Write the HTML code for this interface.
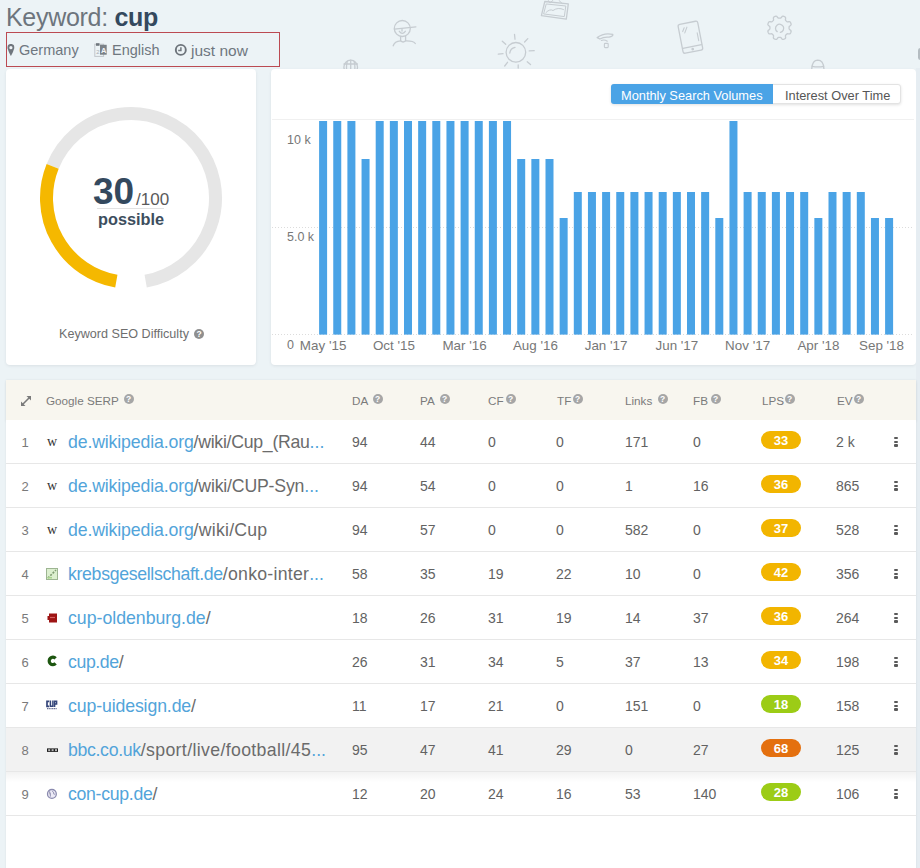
<!DOCTYPE html>
<html><head><meta charset="utf-8"><style>
*{box-sizing:border-box;margin:0;padding:0}
html,body{width:920px;height:868px;overflow:hidden}
body{position:relative;background:#ecf3f6;font-family:"Liberation Sans",sans-serif;color:#555}
.a{position:absolute;white-space:nowrap}
.card{position:absolute;background:#fff;border-radius:4px;box-shadow:0 1px 3px rgba(60,70,80,.10)}
.q{position:absolute;width:10px;height:10px;border-radius:50%;background:#a6a6a6}
.q:after{content:"?";position:absolute;left:0;top:0;width:10px;height:10px;color:#fff;font-size:8.5px;line-height:10px;text-align:center;font-weight:bold}
.th{font-size:11.7px;line-height:12px;color:#7b7b7b}
.td{font-size:14px;line-height:14px;color:#626262}
.url{font-size:17.7px;line-height:18px;color:#52a4da}
.url i{font-style:normal}.url span{color:#6b6b6b}.url b{font-weight:normal;color:#52a4da}
.badge{position:absolute;left:761px;width:40px;height:18px;border-radius:9px;color:#fff;font-weight:bold;font-size:13px;line-height:20.5px;text-align:center}
.dot{position:absolute;left:894.2px;width:3.4px;height:2.6px;background:#5a5a5a;border-radius:1px}
.rn{font-size:13px;line-height:13px;color:#7a7a7a}
</style></head><body>
<svg class="a" style="left:0;top:0" width="920" height="70" fill="none" stroke="#c6ccd1" stroke-width="1.3" stroke-linecap="round" stroke-linejoin="round">
<!-- person -->
<circle cx="402.3" cy="28.5" r="8"/>
<path d="M394.4 29.2 L415.9 26.8"/>
<path d="M402 29 V31"/>
<path d="M399.3 31.3 Q402.3 35.5 405.3 31.3"/>
<path d="M400.6 36.3 V40.8 Q403 43.2 405.6 40.8 V36.3"/>
<path d="M393.2 45.8 Q394.5 41.2 400.6 40.8"/>
<path d="M405.6 40.8 Q413.5 40.6 415.3 43.5"/>
<!-- globe partial -->
<circle cx="350.7" cy="67" r="6.8"/>
<path d="M344 64 H357.4 M350.7 60.2 V74 M347.2 61.5 Q345.8 67 347.2 74 M354.2 61.5 Q355.6 67 354.2 74"/>
<!-- sun -->
<circle cx="515.9" cy="52.3" r="9.8"/>
<path d="M509.8 53 Q510.3 48.3 515 47.3"/>
<path d="M514.5 34.3 L515 39.2 M502.3 41.2 L505.7 44.3 M498.3 54.2 L503 53.6 M504.7 66 L507.5 62.3 M518.2 68 L518.2 64.8 M527.2 61.8 L530.5 64.5 M529.2 50.9 L534.2 50.6 M524.6 42 L527.8 38.6"/>
<!-- frame -->
<path d="M544.8 1.5 L568.3 3.9 L566.3 19.1 L541.4 15.7 Z"/>
<path d="M546.6 4 L565.8 6 L564.3 16.6 L544 14 Z" stroke-width="1"/>
<path d="M546 12.5 Q550 8.5 553 10.5 Q558 7 563.5 9.5" stroke-width="1"/>
<path d="M548.3 0.5 L550 3 L553 0.3 M559 0.5 L562 3.3" stroke-width="1"/>
<!-- wifi -->
<path d="M597.2 37.6 Q604 32.3 612.8 34.4 Q613.4 36.2 609 37.2 Q604 36.6 599.8 39 Q599 38.6 597.2 37.6Z"/>
<path d="M601.3 40.4 Q604.5 39.2 607.3 41.2" stroke-width="1.1"/>
<rect x="604.4" y="43.4" width="3.8" height="4.2" rx="0.8" stroke-width="1.1"/>
<!-- tablet -->
<g transform="translate(690.4 37.2) rotate(-11)">
<rect x="-10" y="-14.7" width="20" height="29.4" rx="2"/>
<path d="M-9.5 9.5 H9.5"/>
<circle cx="0" cy="12.2" r="0.7" fill="#c6ccd1"/>
<path d="M7.5 -3 V5" stroke-width="1.1"/>
<path d="M-6.5 -7 L-4.3 -10.5 M-4.7 -5.3 L-1.5 -10.5" stroke-width="1.1"/>
</g>
<!-- gear -->
<path d="M789.08 27.80 L789.08 27.99 L789.08 28.18 L789.09 28.37 L789.10 28.56 L789.12 28.75 L789.17 28.94 L789.28 29.15 L789.48 29.38 L789.79 29.64 L790.19 29.93 L790.58 30.23 L790.88 30.53 L791.04 30.81 L791.11 31.07 L791.11 31.32 L791.08 31.56 L791.02 31.80 L790.95 32.03 L790.88 32.25 L790.79 32.48 L790.69 32.70 L790.59 32.91 L790.47 33.12 L790.35 33.33 L790.20 33.52 L790.02 33.69 L789.79 33.83 L789.47 33.91 L789.06 33.92 L788.56 33.86 L788.08 33.78 L787.67 33.74 L787.37 33.76 L787.15 33.83 L786.97 33.93 L786.82 34.05 L786.68 34.18 L786.54 34.31 L786.41 34.44 L786.28 34.58 L786.14 34.71 L786.01 34.84 L785.88 34.98 L785.75 35.12 L785.63 35.27 L785.53 35.45 L785.46 35.67 L785.44 35.97 L785.48 36.38 L785.56 36.86 L785.62 37.36 L785.61 37.77 L785.53 38.09 L785.39 38.32 L785.22 38.50 L785.03 38.65 L784.82 38.77 L784.61 38.89 L784.40 38.99 L784.18 39.09 L783.95 39.18 L783.73 39.25 L783.50 39.32 L783.26 39.38 L783.02 39.41 L782.77 39.41 L782.51 39.34 L782.23 39.18 L781.93 38.88 L781.63 38.49 L781.34 38.09 L781.08 37.78 L780.85 37.58 L780.64 37.47 L780.45 37.42 L780.26 37.40 L780.07 37.39 L779.88 37.38 L779.69 37.38 L779.50 37.38 L779.31 37.38 L779.12 37.38 L778.93 37.39 L778.74 37.40 L778.55 37.42 L778.36 37.47 L778.15 37.58 L777.92 37.78 L777.66 38.09 L777.37 38.49 L777.07 38.88 L776.77 39.18 L776.49 39.34 L776.23 39.41 L775.98 39.41 L775.74 39.38 L775.50 39.32 L775.27 39.25 L775.05 39.18 L774.82 39.09 L774.60 38.99 L774.39 38.89 L774.18 38.77 L773.97 38.65 L773.78 38.50 L773.61 38.32 L773.47 38.09 L773.39 37.77 L773.38 37.36 L773.44 36.86 L773.52 36.38 L773.56 35.97 L773.54 35.67 L773.47 35.45 L773.37 35.27 L773.25 35.12 L773.12 34.98 L772.99 34.84 L772.86 34.71 L772.72 34.58 L772.59 34.44 L772.46 34.31 L772.32 34.18 L772.18 34.05 L772.03 33.93 L771.85 33.83 L771.63 33.76 L771.33 33.74 L770.92 33.78 L770.44 33.86 L769.94 33.92 L769.53 33.91 L769.21 33.83 L768.98 33.69 L768.80 33.52 L768.65 33.33 L768.53 33.12 L768.41 32.91 L768.31 32.70 L768.21 32.48 L768.12 32.25 L768.05 32.03 L767.98 31.80 L767.92 31.56 L767.89 31.32 L767.89 31.07 L767.96 30.81 L768.12 30.53 L768.42 30.23 L768.81 29.93 L769.21 29.64 L769.52 29.38 L769.72 29.15 L769.83 28.94 L769.88 28.75 L769.90 28.56 L769.91 28.37 L769.92 28.18 L769.92 27.99 L769.92 27.80 L769.92 27.61 L769.92 27.42 L769.91 27.23 L769.90 27.04 L769.88 26.85 L769.83 26.66 L769.72 26.45 L769.52 26.22 L769.21 25.96 L768.81 25.67 L768.42 25.37 L768.12 25.07 L767.96 24.79 L767.89 24.53 L767.89 24.28 L767.92 24.04 L767.98 23.80 L768.05 23.57 L768.12 23.35 L768.21 23.12 L768.31 22.90 L768.41 22.69 L768.53 22.48 L768.65 22.27 L768.80 22.08 L768.98 21.91 L769.21 21.77 L769.53 21.69 L769.94 21.68 L770.44 21.74 L770.92 21.82 L771.33 21.86 L771.63 21.84 L771.85 21.77 L772.03 21.67 L772.18 21.55 L772.32 21.42 L772.46 21.29 L772.59 21.16 L772.72 21.02 L772.86 20.89 L772.99 20.76 L773.12 20.62 L773.25 20.48 L773.37 20.33 L773.47 20.15 L773.54 19.93 L773.56 19.63 L773.52 19.22 L773.44 18.74 L773.38 18.24 L773.39 17.83 L773.47 17.51 L773.61 17.28 L773.78 17.10 L773.97 16.95 L774.18 16.83 L774.39 16.71 L774.60 16.61 L774.82 16.51 L775.05 16.42 L775.27 16.35 L775.50 16.28 L775.74 16.22 L775.98 16.19 L776.23 16.19 L776.49 16.26 L776.77 16.42 L777.07 16.72 L777.37 17.11 L777.66 17.51 L777.92 17.82 L778.15 18.02 L778.36 18.13 L778.55 18.18 L778.74 18.20 L778.93 18.21 L779.12 18.22 L779.31 18.22 L779.50 18.22 L779.69 18.22 L779.88 18.22 L780.07 18.21 L780.26 18.20 L780.45 18.18 L780.64 18.13 L780.85 18.02 L781.08 17.82 L781.34 17.51 L781.63 17.11 L781.93 16.72 L782.23 16.42 L782.51 16.26 L782.77 16.19 L783.02 16.19 L783.26 16.22 L783.50 16.28 L783.73 16.35 L783.95 16.42 L784.18 16.51 L784.40 16.61 L784.61 16.71 L784.82 16.83 L785.03 16.95 L785.22 17.10 L785.39 17.28 L785.53 17.51 L785.61 17.83 L785.62 18.24 L785.56 18.74 L785.48 19.22 L785.44 19.63 L785.46 19.93 L785.53 20.15 L785.63 20.33 L785.75 20.48 L785.88 20.62 L786.01 20.76 L786.14 20.89 L786.28 21.02 L786.41 21.16 L786.54 21.29 L786.68 21.42 L786.82 21.55 L786.97 21.67 L787.15 21.77 L787.37 21.84 L787.67 21.86 L788.08 21.82 L788.56 21.74 L789.06 21.68 L789.47 21.69 L789.79 21.77 L790.02 21.91 L790.20 22.08 L790.35 22.27 L790.47 22.48 L790.59 22.69 L790.69 22.90 L790.79 23.12 L790.88 23.35 L790.95 23.57 L791.02 23.80 L791.08 24.04 L791.11 24.28 L791.11 24.53 L791.04 24.79 L790.88 25.07 L790.58 25.37 L790.19 25.67 L789.79 25.96 L789.48 26.22 L789.28 26.45 L789.17 26.66 L789.12 26.85 L789.10 27.04 L789.09 27.23 L789.08 27.42 L789.08 27.61 L789.08 27.80Z"/>
<path d="M777.2 31.6 A4.1 4.1 0 1 1 780.4 32.3"/>
<!-- partial person -->
<path d="M811.8 68.5 Q812.3 60.2 817.8 60.1 Q823.4 60.2 823.9 68.5"/>
<path d="M812.2 66.3 Q818 67.6 823.6 66.3"/>
</svg>
<div class="a" style="left:918px;top:48px;width:5px;height:12px;border-radius:3px;background:#b4bcc1"></div>
<div class="a" style="left:6px;top:5px;font-size:25px;line-height:25px;letter-spacing:-0.3px;color:#6d757d">Keyword: <b style="color:#34495e">cup</b></div>
<div class="a" style="left:6px;top:32px;width:274px;height:35px;border:1px solid #bb4a52"></div>
<div class="a" style="font-size:14.5px;line-height:15px;color:#6f777f;top:43px;left:19px">Germany</div>
<div class="a" style="font-size:14.5px;line-height:15px;color:#6f777f;top:43px;left:112px">English</div>
<div class="a" style="font-size:14.5px;line-height:15px;color:#6f777f;top:43px;left:191px;font-size:15.5px">just now</div>
<svg class="a" style="left:0;top:36px" width="200" height="26">
<path d="M10.9 7.9 C7.9 7.9 7.3 10.1 7.6 12.2 C8.1 14.9 10.9 20 10.9 20 C10.9 20 13.7 14.9 14.2 12.2 C14.5 10.1 13.9 7.9 10.9 7.9Z" fill="#6f767d"/>
<circle cx="10.9" cy="11.7" r="1.6" fill="#eef3f7"/>
<rect x="94.8" y="8.2" width="8.8" height="12.2" fill="none" stroke="#c1c6cb" stroke-width="1"/>
<path d="M96 7.2 H99.5 V9.8 H96Z" fill="#6f767d"/>
<text x="96.2" y="17.5" font-size="6" fill="#a9aeb3" font-family="Liberation Sans">2</text>
<rect x="100" y="8.8" width="6.7" height="9.9" fill="#7a8187"/>
<text x="101" y="16.6" font-size="7.5" font-weight="bold" fill="#f2f5f8" font-family="Liberation Sans">A</text>
<circle cx="180.8" cy="13.9" r="5" fill="none" stroke="#6c737a" stroke-width="1.9"/>
<path d="M180.9 11.2 V14.5 H178.2" fill="none" stroke="#70777e" stroke-width="1.5"/>
</svg>
<div class="card" style="left:6px;top:69px;width:250px;height:296px"></div>
<div class="card" style="left:271px;top:69px;width:645px;height:296px"></div>
<svg class="a" style="left:0;top:0" width="260" height="370">
<path d="M52.65 166.35 A84.5 84.5 0 1 1 145.67 281.22" stroke="#e6e6e6" stroke-width="13" fill="none"/>
<path d="M116.33 281.22 A84.5 84.5 0 0 1 52.65 166.35" stroke="#f5b800" stroke-width="13" fill="none"/>
</svg>
<div class="a" style="left:93px;top:173px;font-size:37px;line-height:37px;font-weight:bold;color:#34495e">30</div>
<div class="a" style="left:136px;top:191px;font-size:17px;line-height:17px;color:#5a5a5a">/100</div>
<div class="a" style="left:97px;top:208px;width:67px;height:1px;background:#e2e2e2"></div>
<div class="a" style="left:98px;top:211px;font-size:16.3px;line-height:16px;font-weight:bold;color:#3d4e5e">possible</div>
<div class="a" style="left:59px;top:328px;font-size:12.6px;line-height:13px;color:#6e6e6e">Keyword SEO Difficulty</div>
<div class="q" style="left:194px;top:329px;background:#8f8f8f"></div>
<div class="a" style="left:611px;top:84px;width:290px;height:20px;border-radius:3px;background:#fff;border:1px solid #e3e3e3;box-shadow:0 1px 3px rgba(0,0,0,.12)"></div>
<div class="a" style="left:611px;top:84px;width:162px;height:20px;border-radius:3px 0 0 3px;background:#4aa3e6"></div>
<div class="a" style="left:621px;top:89px;font-size:12.8px;line-height:13px;color:#fff">Monthly Search Volumes</div>
<div class="a" style="left:785px;top:89px;font-size:12.8px;line-height:13px;color:#555">Interest Over Time</div>
<svg class="a" style="left:0;top:0" width="920" height="370"><line x1="272" y1="119.5" x2="914" y2="119.5" stroke="#f0f0f0" stroke-width="1"/><line x1="272" y1="227.5" x2="914" y2="227.5" stroke="#dcdcdc" stroke-width="1" stroke-dasharray="1 2"/><line x1="272" y1="334.5" x2="914" y2="334.5" stroke="#dcdcdc" stroke-width="1" stroke-dasharray="1 2"/><rect x="319.10" y="121" width="8" height="213.6" fill="#4aa3e6"/><rect x="333.25" y="121" width="8" height="213.6" fill="#4aa3e6"/><rect x="347.40" y="121" width="8" height="213.6" fill="#4aa3e6"/><rect x="361.55" y="159" width="8" height="175.6" fill="#4aa3e6"/><rect x="375.70" y="121" width="8" height="213.6" fill="#4aa3e6"/><rect x="389.85" y="121" width="8" height="213.6" fill="#4aa3e6"/><rect x="404.00" y="121" width="8" height="213.6" fill="#4aa3e6"/><rect x="418.15" y="121" width="8" height="213.6" fill="#4aa3e6"/><rect x="432.30" y="121" width="8" height="213.6" fill="#4aa3e6"/><rect x="446.45" y="121" width="8" height="213.6" fill="#4aa3e6"/><rect x="460.60" y="121" width="8" height="213.6" fill="#4aa3e6"/><rect x="474.75" y="121" width="8" height="213.6" fill="#4aa3e6"/><rect x="488.90" y="121" width="8" height="213.6" fill="#4aa3e6"/><rect x="503.05" y="121" width="8" height="213.6" fill="#4aa3e6"/><rect x="517.20" y="159" width="8" height="175.6" fill="#4aa3e6"/><rect x="531.35" y="159" width="8" height="175.6" fill="#4aa3e6"/><rect x="545.50" y="159" width="8" height="175.6" fill="#4aa3e6"/><rect x="559.65" y="218" width="8" height="116.6" fill="#4aa3e6"/><rect x="573.80" y="192" width="8" height="142.6" fill="#4aa3e6"/><rect x="587.95" y="192" width="8" height="142.6" fill="#4aa3e6"/><rect x="602.10" y="192" width="8" height="142.6" fill="#4aa3e6"/><rect x="616.25" y="192" width="8" height="142.6" fill="#4aa3e6"/><rect x="630.40" y="192" width="8" height="142.6" fill="#4aa3e6"/><rect x="644.55" y="192" width="8" height="142.6" fill="#4aa3e6"/><rect x="658.70" y="192" width="8" height="142.6" fill="#4aa3e6"/><rect x="672.85" y="192" width="8" height="142.6" fill="#4aa3e6"/><rect x="687.00" y="192" width="8" height="142.6" fill="#4aa3e6"/><rect x="701.15" y="192" width="8" height="142.6" fill="#4aa3e6"/><rect x="715.30" y="218" width="8" height="116.6" fill="#4aa3e6"/><rect x="729.45" y="121" width="8" height="213.6" fill="#4aa3e6"/><rect x="743.60" y="192" width="8" height="142.6" fill="#4aa3e6"/><rect x="757.75" y="192" width="8" height="142.6" fill="#4aa3e6"/><rect x="771.90" y="192" width="8" height="142.6" fill="#4aa3e6"/><rect x="786.05" y="192" width="8" height="142.6" fill="#4aa3e6"/><rect x="800.20" y="192" width="8" height="142.6" fill="#4aa3e6"/><rect x="814.35" y="218" width="8" height="116.6" fill="#4aa3e6"/><rect x="828.50" y="192" width="8" height="142.6" fill="#4aa3e6"/><rect x="842.65" y="192" width="8" height="142.6" fill="#4aa3e6"/><rect x="856.80" y="192" width="8" height="142.6" fill="#4aa3e6"/><rect x="870.95" y="218" width="8" height="116.6" fill="#4aa3e6"/><rect x="885.10" y="218" width="8" height="116.6" fill="#4aa3e6"/></svg>
<div class="a" style="font-size:12.5px;line-height:13px;color:#777;left:287px;top:134px">10 k</div>
<div class="a" style="font-size:12.5px;line-height:13px;color:#777;left:287px;top:231px">5.0 k</div>
<div class="a" style="font-size:12.5px;line-height:13px;color:#777;left:287px;top:339px">0</div>
<div class="a" style="font-size:12.5px;line-height:13px;color:#777;left:263.1px;width:120px;text-align:center;top:339px;font-size:13.4px">May '15</div>
<div class="a" style="font-size:12.5px;line-height:13px;color:#777;left:333.9px;width:120px;text-align:center;top:339px;font-size:13.4px">Oct '15</div>
<div class="a" style="font-size:12.5px;line-height:13px;color:#777;left:404.6px;width:120px;text-align:center;top:339px;font-size:13.4px">Mar '16</div>
<div class="a" style="font-size:12.5px;line-height:13px;color:#777;left:475.4px;width:120px;text-align:center;top:339px;font-size:13.4px">Aug '16</div>
<div class="a" style="font-size:12.5px;line-height:13px;color:#777;left:546.1px;width:120px;text-align:center;top:339px;font-size:13.4px">Jan '17</div>
<div class="a" style="font-size:12.5px;line-height:13px;color:#777;left:616.9px;width:120px;text-align:center;top:339px;font-size:13.4px">Jun '17</div>
<div class="a" style="font-size:12.5px;line-height:13px;color:#777;left:687.6px;width:120px;text-align:center;top:339px;font-size:13.4px">Nov '17</div>
<div class="a" style="font-size:12.5px;line-height:13px;color:#777;left:758.4px;width:120px;text-align:center;top:339px;font-size:13.4px">Apr '18</div>
<div class="a" style="font-size:12.5px;line-height:13px;color:#777;left:821.5px;width:120px;text-align:center;top:339px;font-size:13.4px">Sep '18</div>
<div class="a" style="left:916px;top:68px;width:4px;height:800px;background:#e6edf2"></div>
<div class="a" style="left:6px;top:380px;width:910px;height:500px;background:#fff;box-shadow:0 0 2px rgba(0,0,0,.08)"></div>
<div class="a" style="left:6px;top:380px;width:910px;height:40px;background:#f8f6ef;box-shadow:0 2px 3px rgba(0,0,0,.06)"></div>
<svg class="a" style="left:19px;top:394px" width="14" height="14" fill="#7a7a7a" stroke="#7a7a7a">
<path d="M3 11 L11 3" stroke-width="1.6"/><path d="M7.5 2 H12 V6.5Z" stroke="none"/><path d="M2 7.5 V12 H6.5Z" stroke="none"/></svg>
<div class="a th" style="left:46px;top:394.5px">Google SERP</div>
<div class="q" style="left:123.5px;top:394px"></div>
<div class="a th" style="left:352px;top:394.5px">DA</div>
<div class="q" style="left:372.5px;top:394px"></div>
<div class="a th" style="left:420px;top:394.5px">PA</div>
<div class="q" style="left:439.5px;top:394px"></div>
<div class="a th" style="left:488px;top:394.5px">CF</div>
<div class="q" style="left:505.5px;top:394px"></div>
<div class="a th" style="left:557px;top:394.5px">TF</div>
<div class="q" style="left:572.5px;top:394px"></div>
<div class="a th" style="left:625px;top:394.5px">Links</div>
<div class="q" style="left:657.5px;top:394px"></div>
<div class="a th" style="left:693px;top:394.5px">FB</div>
<div class="q" style="left:710.5px;top:394px"></div>
<div class="a th" style="left:762px;top:394.5px">LPS</div>
<div class="q" style="left:784.5px;top:394px"></div>
<div class="a th" style="left:837px;top:394.5px">EV</div>
<div class="q" style="left:853.5px;top:394px"></div>
<div class="a" style="left:6px;top:420px;width:910px;height:44px;background:#fff;border-bottom:1px solid #e7e7e7"></div>
<div class="a rn" style="left:21.5px;top:435.5px">1</div>
<div class="a url" style="left:68px;top:432.5px"><i style="letter-spacing:-0.14px">de.wikipedia.org</i><span style="letter-spacing:-0.28px">/wiki/Cup_(Rau</span><b>...</b></div>
<div class="a td" style="left:352px;top:434.5px">94</div>
<div class="a td" style="left:420px;top:434.5px">44</div>
<div class="a td" style="left:488px;top:434.5px">0</div>
<div class="a td" style="left:556px;top:434.5px">0</div>
<div class="a td" style="left:625px;top:434.5px">171</div>
<div class="a td" style="left:693px;top:434.5px">0</div>
<div class="badge" style="top:430.5px;background:#f2b500">33</div>
<div class="a td" style="left:836px;top:434.5px">2 k</div>
<div class="dot" style="top:436.6px"></div>
<div class="dot" style="top:440.6px"></div>
<div class="dot" style="top:444.2px"></div>
<div class="a" style="left:47px;top:420px;margin-top:15px;font-family:'Liberation Serif',serif;font-size:14px;line-height:14px;color:#333">w</div>
<div class="a" style="left:6px;top:464px;width:910px;height:44px;background:#fff;border-bottom:1px solid #e7e7e7"></div>
<div class="a rn" style="left:21.5px;top:479.5px">2</div>
<div class="a url" style="left:68px;top:476.5px"><i style="letter-spacing:-0.14px">de.wikipedia.org</i><span style="letter-spacing:-0.18px">/wiki/CUP-Syn</span><b>...</b></div>
<div class="a td" style="left:352px;top:478.5px">94</div>
<div class="a td" style="left:420px;top:478.5px">54</div>
<div class="a td" style="left:488px;top:478.5px">0</div>
<div class="a td" style="left:556px;top:478.5px">0</div>
<div class="a td" style="left:625px;top:478.5px">1</div>
<div class="a td" style="left:693px;top:478.5px">16</div>
<div class="badge" style="top:474.5px;background:#f2b500">36</div>
<div class="a td" style="left:836px;top:478.5px">865</div>
<div class="dot" style="top:480.6px"></div>
<div class="dot" style="top:484.6px"></div>
<div class="dot" style="top:488.2px"></div>
<div class="a" style="left:47px;top:464px;margin-top:15px;font-family:'Liberation Serif',serif;font-size:14px;line-height:14px;color:#333">w</div>
<div class="a" style="left:6px;top:508px;width:910px;height:44px;background:#fff;border-bottom:1px solid #e7e7e7"></div>
<div class="a rn" style="left:21.5px;top:523.5px">3</div>
<div class="a url" style="left:68px;top:520.5px"><i style="letter-spacing:-0.14px">de.wikipedia.org</i><span style="letter-spacing:0.23px">/wiki/Cup</span></div>
<div class="a td" style="left:352px;top:522.5px">94</div>
<div class="a td" style="left:420px;top:522.5px">57</div>
<div class="a td" style="left:488px;top:522.5px">0</div>
<div class="a td" style="left:556px;top:522.5px">0</div>
<div class="a td" style="left:625px;top:522.5px">582</div>
<div class="a td" style="left:693px;top:522.5px">0</div>
<div class="badge" style="top:518.5px;background:#f2b500">37</div>
<div class="a td" style="left:836px;top:522.5px">528</div>
<div class="dot" style="top:524.6px"></div>
<div class="dot" style="top:528.6px"></div>
<div class="dot" style="top:532.2px"></div>
<div class="a" style="left:47px;top:508px;margin-top:15px;font-family:'Liberation Serif',serif;font-size:14px;line-height:14px;color:#333">w</div>
<div class="a" style="left:6px;top:552px;width:910px;height:44px;background:#fff;border-bottom:1px solid #e7e7e7"></div>
<div class="a rn" style="left:21.5px;top:567.5px">4</div>
<div class="a url" style="left:68px;top:564.5px"><i style="letter-spacing:-0.32px">krebsgesellschaft.de</i><span style="letter-spacing:0.25px">/onko-inter</span><b>...</b></div>
<div class="a td" style="left:352px;top:566.5px">58</div>
<div class="a td" style="left:420px;top:566.5px">35</div>
<div class="a td" style="left:488px;top:566.5px">19</div>
<div class="a td" style="left:556px;top:566.5px">22</div>
<div class="a td" style="left:625px;top:566.5px">10</div>
<div class="a td" style="left:693px;top:566.5px">0</div>
<div class="badge" style="top:562.5px;background:#f2b500">42</div>
<div class="a td" style="left:836px;top:566.5px">356</div>
<div class="dot" style="top:568.6px"></div>
<div class="dot" style="top:572.6px"></div>
<div class="dot" style="top:576.2px"></div>
<svg class="a" style="left:46px;top:552px;margin-top:16px" width="12" height="12"><rect x="0.5" y="0.5" width="11" height="11" fill="#dcefcf" stroke="#9db592"/><path d="M2 10 L10 2" stroke="#7f9b72" stroke-width="1.6" stroke-dasharray="2 1.3"/><path d="M1.5 9 H6 V10.5 H1.5Z" fill="#a8d48c"/></svg>
<div class="a" style="left:6px;top:596px;width:910px;height:44px;background:#fff;border-bottom:1px solid #e7e7e7"></div>
<div class="a rn" style="left:21.5px;top:611.5px">5</div>
<div class="a url" style="left:68px;top:608.5px"><i style="letter-spacing:0px">cup-oldenburg.de</i><span style="letter-spacing:0px">/</span></div>
<div class="a td" style="left:352px;top:610.5px">18</div>
<div class="a td" style="left:420px;top:610.5px">26</div>
<div class="a td" style="left:488px;top:610.5px">31</div>
<div class="a td" style="left:556px;top:610.5px">19</div>
<div class="a td" style="left:625px;top:610.5px">14</div>
<div class="a td" style="left:693px;top:610.5px">37</div>
<div class="badge" style="top:606.5px;background:#f2b500">36</div>
<div class="a td" style="left:836px;top:610.5px">264</div>
<div class="dot" style="top:612.6px"></div>
<div class="dot" style="top:616.6px"></div>
<div class="dot" style="top:620.2px"></div>
<svg class="a" style="left:47px;top:596px;margin-top:16.5px" width="11" height="10"><path d="M2 0.5 H10 V9.5 H2 V7 H0.5 V3 H2Z" fill="#9e1414"/><path d="M3 4.5 H8" stroke="#d56060" stroke-width="1.2"/></svg>
<div class="a" style="left:6px;top:640px;width:910px;height:44px;background:#fff;border-bottom:1px solid #e7e7e7"></div>
<div class="a rn" style="left:21.5px;top:655.5px">6</div>
<div class="a url" style="left:68px;top:652.5px"><i style="letter-spacing:-0.4px">cup.de</i><span style="letter-spacing:0px">/</span></div>
<div class="a td" style="left:352px;top:654.5px">26</div>
<div class="a td" style="left:420px;top:654.5px">31</div>
<div class="a td" style="left:488px;top:654.5px">34</div>
<div class="a td" style="left:556px;top:654.5px">5</div>
<div class="a td" style="left:625px;top:654.5px">37</div>
<div class="a td" style="left:693px;top:654.5px">13</div>
<div class="badge" style="top:650.5px;background:#f2b500">34</div>
<div class="a td" style="left:836px;top:654.5px">198</div>
<div class="dot" style="top:656.6px"></div>
<div class="dot" style="top:660.6px"></div>
<div class="dot" style="top:664.2px"></div>
<svg class="a" style="left:46px;top:640px;margin-top:15px" width="13" height="13"><path d="M9.6 3.4 A3.7 3.7 0 1 0 9.6 8.4" fill="none" stroke="#1d5610" stroke-width="3.2"/></svg>
<div class="a" style="left:6px;top:684px;width:910px;height:44px;background:#fff;border-bottom:1px solid #e7e7e7"></div>
<div class="a rn" style="left:21.5px;top:699.5px">7</div>
<div class="a url" style="left:68px;top:696.5px"><i style="letter-spacing:-0.12px">cup-uidesign.de</i><span style="letter-spacing:0px">/</span></div>
<div class="a td" style="left:352px;top:698.5px">11</div>
<div class="a td" style="left:420px;top:698.5px">17</div>
<div class="a td" style="left:488px;top:698.5px">21</div>
<div class="a td" style="left:556px;top:698.5px">0</div>
<div class="a td" style="left:625px;top:698.5px">151</div>
<div class="a td" style="left:693px;top:698.5px">0</div>
<div class="badge" style="top:694.5px;background:#9ccc16">18</div>
<div class="a td" style="left:836px;top:698.5px">158</div>
<div class="dot" style="top:700.6px"></div>
<div class="dot" style="top:704.6px"></div>
<div class="dot" style="top:708.2px"></div>
<svg class="a" style="left:46px;top:684px;margin-top:16px" width="12" height="12" fill="none" stroke="#34457a"><path d="M3.2 1.3 H1 V6.4 H3.2" stroke-width="1.7"/><path d="M4.4 0.6 V6.2 H6.9 V0.6" stroke-width="1.5"/><path d="M8.6 7 V1.2 H10.6 V3.9 H8.6" stroke-width="1.5"/><path d="M1 8.6 H11" stroke="#6a7196" stroke-width="1.3" stroke-dasharray="1.2 0.5"/></svg>
<div class="a" style="left:6px;top:728px;width:910px;height:44px;background:#f2f2f2;border-bottom:1px solid #e7e7e7"></div>
<div class="a rn" style="left:21.5px;top:743.5px">8</div>
<div class="a url" style="left:68px;top:740.5px"><i style="letter-spacing:-0.33px">bbc.co.uk</i><span style="letter-spacing:0.36px">/sport/live/football/45</span><b>...</b></div>
<div class="a td" style="left:352px;top:742.5px">95</div>
<div class="a td" style="left:420px;top:742.5px">47</div>
<div class="a td" style="left:488px;top:742.5px">41</div>
<div class="a td" style="left:556px;top:742.5px">29</div>
<div class="a td" style="left:625px;top:742.5px">0</div>
<div class="a td" style="left:693px;top:742.5px">27</div>
<div class="badge" style="top:738.5px;background:#e4700f">68</div>
<div class="a td" style="left:836px;top:742.5px">125</div>
<div class="dot" style="top:744.6px"></div>
<div class="dot" style="top:748.6px"></div>
<div class="dot" style="top:752.2px"></div>
<svg class="a" style="left:47px;top:728px;margin-top:20px" width="11" height="5"><rect x="0" y="0.4" width="11" height="3.5" fill="#1e1e1e"/><rect x="1.2" y="1.2" width="2" height="1.9" fill="#bbb"/><rect x="4.6" y="1.2" width="2" height="1.9" fill="#bbb"/><rect x="8" y="1.2" width="2" height="1.9" fill="#bbb"/></svg>
<div class="a" style="left:6px;top:772px;width:910px;height:44px;background:#fff;border-bottom:1px solid #e7e7e7"></div>
<div class="a" style="left:6px;top:772px;width:910px;height:10px;background:linear-gradient(rgba(0,0,0,.05),rgba(0,0,0,0))"></div>
<div class="a rn" style="left:21.5px;top:787.5px">9</div>
<div class="a url" style="left:68px;top:784.5px"><i style="letter-spacing:-0.3px">con-cup.de</i><span style="letter-spacing:0px">/</span></div>
<div class="a td" style="left:352px;top:786.5px">12</div>
<div class="a td" style="left:420px;top:786.5px">20</div>
<div class="a td" style="left:488px;top:786.5px">24</div>
<div class="a td" style="left:556px;top:786.5px">16</div>
<div class="a td" style="left:625px;top:786.5px">53</div>
<div class="a td" style="left:693px;top:786.5px">140</div>
<div class="badge" style="top:782.5px;background:#9ccc16">28</div>
<div class="a td" style="left:836px;top:786.5px">106</div>
<div class="dot" style="top:788.6px"></div>
<div class="dot" style="top:792.6px"></div>
<div class="dot" style="top:796.2px"></div>
<svg class="a" style="left:46px;top:772px;margin-top:16px" width="12" height="12"><circle cx="5.9" cy="5.9" r="4.4" fill="#eceaf6" stroke="#8a8aae" stroke-width="1.3"/><path d="M3.5 3.2 Q5 6 4.2 8.8 M6.3 3 Q7.8 4.2 8.4 6.8" stroke="#9d9dc0" stroke-width="1"/></svg>
</body></html>
